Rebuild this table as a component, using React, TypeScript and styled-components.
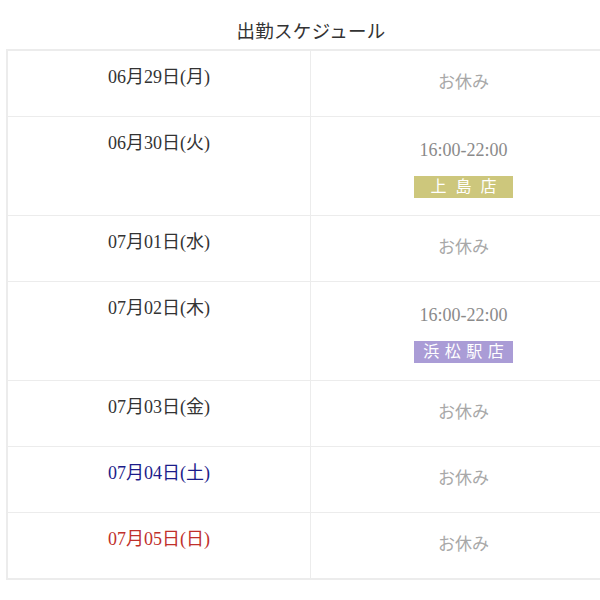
import styled, { createGlobalStyle } from "styled-components";

interface IShift {
    date: string;
    tone?: "sat" | "sun";
    time?: string;
    shop?: string;
    shopColor?: string;
    spacing?: number;
}

const schedule: IShift[] = [
    { date: "06月29日(月)" },
    { date: "06月30日(火)", time: "16:00-22:00", shop: "上島店", shopColor: "#cdc77c", spacing: 9 },
    { date: "07月01日(水)" },
    { date: "07月02日(木)", time: "16:00-22:00", shop: "浜松駅店", shopColor: "#aa9cd6", spacing: 5.5 },
    { date: "07月03日(金)" },
    { date: "07月04日(土)", tone: "sat" },
    { date: "07月05日(日)", tone: "sun" },
];

const toneColor = {
    sat: "#1c1c8a",
    sun: "#c0302b",
    none: "#333333",
};

const GlobalStyle = createGlobalStyle`
    html, body {
        margin: 0;
        padding: 0;
        background: #ffffff;
        overflow: hidden;
    }
    body {
        font-family: "Liberation Serif", "Noto Sans CJK JP", serif;
    }
`;

const Page = styled.div`
    width: 610px;
    padding-left: 6px;
`;

const Title = styled.h2`
    margin: 0;
    padding-top: 21px;
    height: 28px;
    line-height: 22px;
    font-size: 18.5px;
    font-weight: normal;
    color: #333;
    text-align: center;
    letter-spacing: 0.3px;
`;

const Table = styled.div`
    border-top: 2px solid #ececec;
    border-left: 2px solid #ececec;
`;

const Row = styled.div<{ $tall: boolean }>`
    display: grid;
    grid-template-columns: 303px 305px;
    min-height: ${props => (props.$tall ? 98 : 65)}px;
    border-bottom: 2px solid #ececec;
    &:not(:last-child) {
        border-bottom-width: 1px;
    }
`;

const DateCell = styled.div<{ $tone: keyof typeof toneColor }>`
    padding-top: 16px;
    border-right: 1px solid #ececec;
    text-align: center;
    font-size: 18px;
    line-height: 20px;
    color: ${props => toneColor[props.$tone]};
`;

const ShiftCell = styled.div`
    display: flex;
    flex-direction: column;
    align-items: center;
    justify-content: center;
    gap: 16px;
`;

const Off = styled.span`
    font-family: "Noto Sans CJK JP", sans-serif;
    font-size: 17px;
    line-height: 20px;
    color: #a8a8a8;
    margin-bottom: 5px;
`;

const Time = styled.span`
    font-size: 18px;
    line-height: 20px;
    color: #8a8a8a;
    margin-top: 5px;
`;

const Shop = styled.span<{ $bg: string; $spacing: number }>`
    display: block;
    width: 99px;
    height: 22px;
    line-height: 22px;
    background: ${props => props.$bg};
    color: #ffffff;
    font-size: 16px;
    text-align: center;
    letter-spacing: ${props => props.$spacing}px;
    text-indent: ${props => props.$spacing}px;
`;

const App = () => {
    return (
        <Page>
            <GlobalStyle />
            <Title>出勤スケジュール</Title>
            <Table>
                {schedule.map(item => (
                    <Row key={item.date} $tall={!!item.shop}>
                        <DateCell $tone={item.tone ?? "none"}>{item.date}</DateCell>
                        <ShiftCell>
                            {item.shop ? (
                                <>
                                    <Time>{item.time}</Time>
                                    <Shop $bg={item.shopColor!} $spacing={item.spacing!}>{item.shop}</Shop>
                                </>
                            ) : (
                                <Off>お休み</Off>
                            )}
                        </ShiftCell>
                    </Row>
                ))}
            </Table>
        </Page>
    );
};

export default App;
